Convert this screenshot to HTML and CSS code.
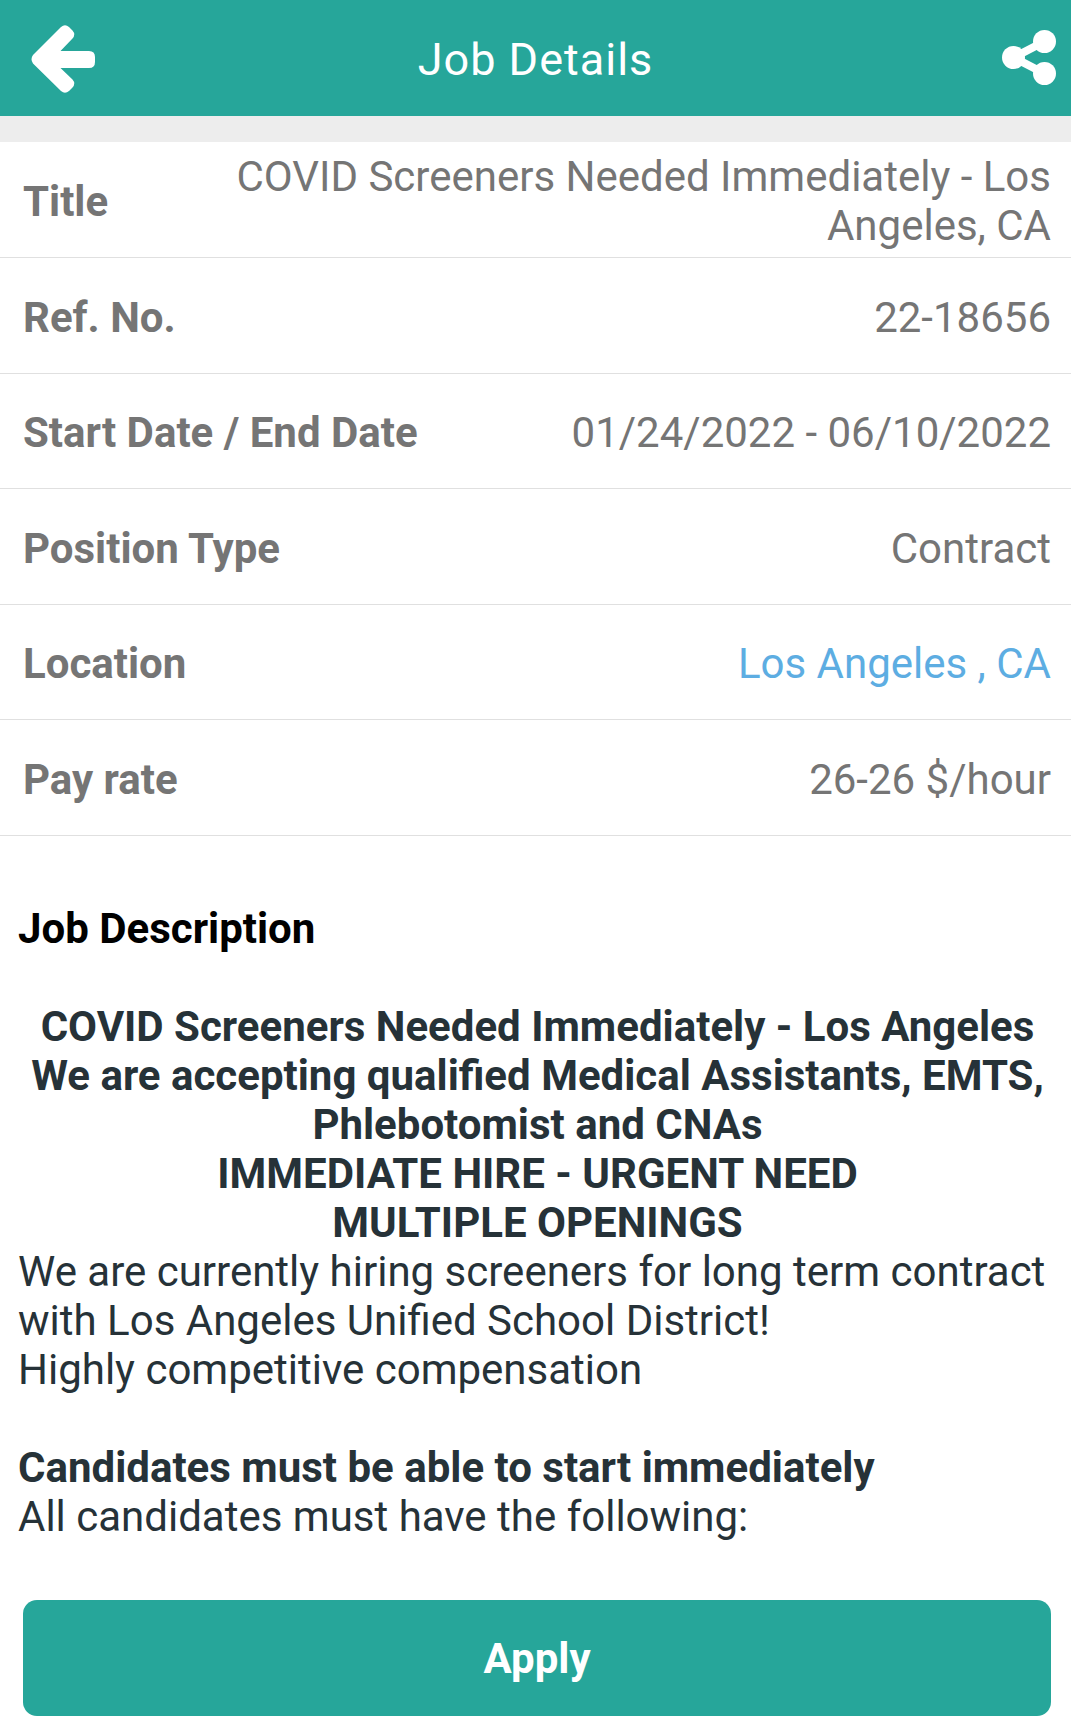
FILE: index.html
```html
<!DOCTYPE html>
<html lang="en">
<head>
    <meta charset="UTF-8">
    <meta name="viewport" content="width=device-width, initial-scale=1.0">
    <title>Job Details</title>
    <link rel="stylesheet" href="styles.css">
</head>
<body>

    <header class="topbar">
        <button type="button" class="icon-btn" aria-label="Back">
            <svg class="back-icon" viewBox="0 0 64 68">
                <path d="M2 30 L30 2 Q34 -1.500 38 2 L41.500 5.500 Q45 9.500 41.500 13.500 L29.500 26 H58 Q64 26 64 32 V37 Q64 43 58 43 H29.500 L41.500 54.500 Q45 58.500 41.500 62.500 L38 66 Q34 69.500 30 66 L2 38.500 Q-1 34.200 2 30 Z" fill="#fff"/>
            </svg>
        </button>
        <h1>Job Details</h1>
        <button type="button" class="icon-btn share-btn" aria-label="Share">
            <svg class="share-icon" viewBox="0 0 54 58">
                <path d="M42.500 11.500 L11.500 27.500 L42.500 43.500" fill="none" stroke="#fff" stroke-width="8"/>
                <circle cx="42.500" cy="11.500" r="11.500" fill="#fff"/>
                <circle cx="11.500" cy="27.500" r="11.500" fill="#fff"/>
                <circle cx="42.500" cy="43.500" r="11.500" fill="#fff"/>
            </svg>
        </button>
    </header>

    <dl class="details">
        <div class="row">
            <dt>Title</dt>
            <dd>COVID Screeners Needed Immediately - Los Angeles, CA</dd>
        </div>
        <div class="row">
            <dt>Ref. No.</dt>
            <dd>22-18656</dd>
        </div>
        <div class="row">
            <dt>Start Date / End Date</dt>
            <dd>01/24/2022 - 06/10/2022</dd>
        </div>
        <div class="row">
            <dt>Position Type</dt>
            <dd>Contract</dd>
        </div>
        <div class="row">
            <dt>Location</dt>
            <dd><a href="#">Los Angeles , CA</a></dd>
        </div>
        <div class="row">
            <dt>Pay rate</dt>
            <dd>26-26 $/hour</dd>
        </div>
    </dl>

    <main class="description">
        <h2>Job Description</h2>
        <p class="headline">
            COVID Screeners Needed Immediately - Los Angeles<br>
            We are accepting qualified Medical Assistants, EMTS, Phlebotomist and CNAs<br>
            IMMEDIATE HIRE - URGENT NEED<br>
            MULTIPLE OPENINGS
        </p>
        <p>We are currently hiring screeners for long term contract with Los Angeles Unified School District!</p>
        <p>Highly competitive compensation</p>
        <p class="requirements"><strong>Candidates must be able to start immediately</strong></p>
        <p>All candidates must have the following:</p>
    </main>

    <footer class="actions">
        <button type="button" class="apply-btn">Apply</button>
    </footer>

</body>
</html>
```

FILE: styles.css
```css
* {
    box-sizing: border-box;
}
body {
    margin: 0;
    background-color: white;
    font-family: Roboto, sans-serif;
    font-size: 42px;
    line-height: 49px;
    color: #263238;
}
h1, h2, p, dl, dd {
    margin: 0;
}
button {
    border: none;
    font-family: inherit;
    cursor: pointer;
}
.topbar {
    display: grid;
    grid-template-columns: 1fr auto 1fr;
    align-items: center;
    height: 116px;
    padding: 2px 15px 0;
    background-color: #26a69a;
    color: white;
}
.topbar h1 {
    font-size: 45px;
    font-weight: 400;
    letter-spacing: 1px;
}
.icon-btn {
    display: flex;
    justify-self: start;
    padding: 0 16px;
    background: none;
}
.share-btn {
    justify-self: end;
    padding: 0;
}
.back-icon {
    width: 64px;
    height: 68px;
}
.share-icon {
    width: 54px;
    height: 58px;
}
.details {
    border-top: 26px solid #ededed;
    color: #757575;
}
.row {
    display: flex;
    align-items: center;
    justify-content: space-between;
    gap: 100px;
    min-height: 115px;
    padding: 10px 20px 7px 23px;
    border-bottom: 1px solid #e0e0e0;
}
.row:nth-child(even) {
    min-height: 116px;
}
.row dt {
    flex-shrink: 0;
    font-weight: 700;
}
.row dd {
    text-align: right;
}
.row a {
    color: #5dade2;
    text-decoration: none;
}
.description {
    padding: 68px 14px 0 18px;
}
.description h2 {
    margin-bottom: 49px;
    font-size: 42px;
    font-weight: 700;
    color: black;
}
.headline {
    font-weight: 700;
    text-align: center;
}
.requirements {
    margin-top: 49px;
}
.actions {
    padding: 59px 20px 13px 23px;
}
.apply-btn {
    width: 100%;
    height: 116px;
    border-radius: 14px;
    background-color: #26a69a;
    color: white;
    font-size: 42px;
    font-weight: 700;
}
```
